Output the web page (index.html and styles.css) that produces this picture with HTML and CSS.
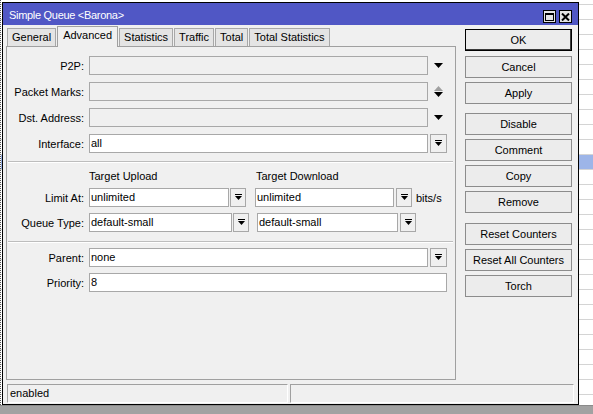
FILE: index.html
```html
<!DOCTYPE html>
<html>
<head>
<meta charset="utf-8">
<title>Simple Queue</title>
<link rel="stylesheet" href="styles.css">
</head>
<body>
<div class="desk">
  <div class="win">
    <div class="titlebar">
      <span class="title">Simple Queue &lt;Barona&gt;</span>
      <span class="tbtns">
        <span class="tbtn"><svg width="9" height="8" viewBox="0 0 9 8"><path d="M0 0h9v8H0z M1 2v5h7V2z" fill="#000" fill-rule="evenodd"/></svg></span>
        <span class="tbtn"><svg width="9" height="8" viewBox="0 0 9 8"><path d="M1 0.5l7 7M8 0.5l-7 7" stroke="#000" stroke-width="2"/></svg></span>
      </span>
    </div>
    <div class="body">
      <div class="main">
        <div class="tabs">
          <span class="tab">General</span>
          <span class="tab active">Advanced</span>
          <span class="tab">Statistics</span>
          <span class="tab">Traffic</span>
          <span class="tab">Total</span>
          <span class="tab">Total Statistics</span>
        </div>
        <div class="panel">
          <div class="grp g1">
            <div class="row">
              <span class="lbl">P2P:</span>
              <span class="inp dis fill"></span>
              <span class="arrow"><svg width="9" height="5" viewBox="0 0 9 5"><path d="M0 0h9L4.5 5z"/></svg></span>
            </div>
            <div class="row">
              <span class="lbl">Packet Marks:</span>
              <span class="inp dis fill"></span>
              <span class="arrow"><svg width="9" height="11" viewBox="0 0 9 11"><path d="M4.5 0L9 5H0z" fill="#a0a0a0"/><path d="M0 6h9L4.5 11z"/></svg></span>
            </div>
            <div class="row">
              <span class="lbl">Dst. Address:</span>
              <span class="inp dis fill"></span>
              <span class="arrow"><svg width="9" height="5" viewBox="0 0 9 5"><path d="M0 0h9L4.5 5z"/></svg></span>
            </div>
            <div class="row">
              <span class="lbl">Interface:</span>
              <span class="inp fill">all</span>
              <span class="dd"><svg width="7" height="7" viewBox="0 0 7 7"><rect width="7" height="1"/><path d="M0 2h7L3.5 6z"/></svg></span>
            </div>
          </div>
          <div class="sep"></div>
          <div class="hdr">
            <span class="hcol">Target Upload</span>
            <span>Target Download</span>
          </div>
          <div class="row lim">
            <span class="lbl">Limit At:</span>
            <span class="inp lim1">unlimited</span>
            <span class="dd sm"><svg width="7" height="7" viewBox="0 0 7 7"><rect width="7" height="1"/><path d="M0 2h7L3.5 6z"/></svg></span>
            <span class="inp lim2">unlimited</span>
            <span class="dd sm2"><svg width="7" height="7" viewBox="0 0 7 7"><rect width="7" height="1"/><path d="M0 2h7L3.5 6z"/></svg></span>
            <span class="unit">bits/s</span>
          </div>
          <div class="row qt">
            <span class="lbl">Queue Type:</span>
            <span class="inp q1">default-small</span>
            <span class="dd sm"><svg width="7" height="7" viewBox="0 0 7 7"><rect width="7" height="1"/><path d="M0 2h7L3.5 6z"/></svg></span>
            <span class="inp q2">default-small</span>
            <span class="dd sm2"><svg width="7" height="7" viewBox="0 0 7 7"><rect width="7" height="1"/><path d="M0 2h7L3.5 6z"/></svg></span>
          </div>
          <div class="sep sep2"></div>
          <div class="row par">
            <span class="lbl">Parent:</span>
            <span class="inp fill">none</span>
            <span class="dd"><svg width="7" height="7" viewBox="0 0 7 7"><rect width="7" height="1"/><path d="M0 2h7L3.5 6z"/></svg></span>
          </div>
          <div class="row pri">
            <span class="lbl">Priority:</span>
            <span class="inp fill">8</span>
          </div>
        </div>
      </div>
      <div class="actions">
        <span class="btn ok">OK</span>
        <span class="btn">Cancel</span>
        <span class="btn">Apply</span>
        <span class="btn gap1">Disable</span>
        <span class="btn">Comment</span>
        <span class="btn">Copy</span>
        <span class="btn">Remove</span>
        <span class="btn gap2">Reset Counters</span>
        <span class="btn">Reset All Counters</span>
        <span class="btn">Torch</span>
      </div>
    </div>
    <div class="status">
      <div class="cell c1">enabled</div>
      <div class="cell c2"></div>
    </div>
  </div>
</div>
<div class="taskbar"></div>
</body>
</html>
```

FILE: styles.css
```css
* {
  box-sizing: border-box;
  margin: 0;
  padding: 0;
}

html, body {
  width: 593px;
  height: 414px;
  overflow: hidden;
}

body {
  font-family: "Liberation Sans", Arial, sans-serif;
  font-size: 11px;
  color: #000;
  background: #fff;
}

.desk {
  height: 405px;
  padding: 2px 0 0 1px;
  border-left: 1px dotted #555;
  background-color: #fff;
  background-image:
    linear-gradient(to bottom, transparent 155px, #9db5e8 155px, #9db5e8 169px, transparent 169px),
    repeating-linear-gradient(to bottom, #d4d4d4 0px, #d4d4d4 1px, #ffffff 1px, #ffffff 15px);
  background-position: 0 0, 0 4px;
  background-repeat: no-repeat, repeat;
}

.win {
  width: 577px;
  height: 403px;
  border: 1px solid #000;
  background: #f0f0f0;
  display: flex;
  flex-direction: column;
}

.titlebar {
  height: 22px;
  flex: none;
  background: #5057c5;
  color: #fff;
  display: flex;
  align-items: center;
  justify-content: space-between;
  padding: 0 6px 0 6px;
}

.title {
  font-size: 11px;
  letter-spacing: -0.3px;
  padding-top: 1px;
}

.tbtns {
  display: flex;
  gap: 3px;
  margin-top: 5px;
}

.tbtn {
  width: 13px;
  height: 13px;
  border: 1px solid #000;
  background: #e4e4e4;
  display: flex;
  align-items: center;
  justify-content: center;
}

.body {
  flex: 1;
  display: flex;
  padding: 1px 0 0 3px;
}

.main {
  width: 450px;
  display: flex;
  flex-direction: column;
}

.tabs {
  height: 20px;
  display: flex;
  align-items: flex-end;
  padding-left: 1px;
  position: relative;
  z-index: 1;
}

.tab {
  height: 18px;
  line-height: 16px;
  padding: 0 4px;
  border: 1px solid #a8a8a8;
  border-bottom: none;
  background: #e4e4e4;
  margin-right: 1px;
  white-space: nowrap;
}

.tab.active {
  height: 21px;
  line-height: 17px;
  margin-bottom: -1px;
  background: #f0f0f0;
  border-color: #a0a0a0;
  padding: 0 5px;
}

.panel {
  height: 334px;
  border: 1px solid #a0a0a0;
  padding: 9px 8px 0 0;
}

.grp {
  display: flex;
  flex-direction: column;
  gap: 7px;
}

.row {
  height: 19px;
  display: flex;
  align-items: center;
}

.lbl {
  width: 77px;
  flex: none;
  text-align: right;
  margin-right: 5px;
  white-space: nowrap;
}

.inp {
  height: 19px;
  border: 1px solid #a8a8a8;
  background: #fff;
  padding-left: 1px;
  line-height: 17px;
  white-space: nowrap;
  overflow: hidden;
  flex: none;
}

.inp.dis {
  background: #f0f0f0;
}

.inp.fill {
  flex: 1;
}

.arrow {
  width: 17px;
  margin-left: 2px;
  display: flex;
  justify-content: center;
  align-items: center;
  flex: none;
}

.dd {
  width: 17px;
  height: 19px;
  margin-left: 2px;
  border: 1px solid #a8a8a8;
  background: #f0f0f0;
  display: flex;
  align-items: center;
  justify-content: center;
  flex: none;
}

.dd svg {
  display: block;
}

.dd.sm {
  width: 16px;
  margin-left: 1px;
}

.dd.sm2 {
  width: 16px;
  margin-left: 2px;
}

.sep {
  height: 1px;
  background: #bdbdbd;
  box-shadow: 0 1px 0 #fff;
  margin: 8px -6px 0 1px;
}

.sep2 {
  margin-top: 9px;
}

.hdr {
  display: flex;
  height: 13px;
  line-height: 13px;
  margin-top: 8px;
  padding-left: 82px;
}

.hcol {
  width: 167px;
}

.lim {
  margin-top: 5px;
}

.qt {
  margin-top: 6px;
}

.lim1 {
  width: 140px;
}

.lim2 {
  width: 139px;
  margin-left: 9px;
}

.q1 {
  width: 143px;
}

.q2 {
  width: 141px;
  margin-left: 8px;
}

.unit {
  margin-left: 4px;
}

.par,
.pri {
  margin-top: 6px;
}

.actions {
  width: 107px;
  margin-left: 9px;
  padding-top: 3px;
  display: flex;
  flex-direction: column;
}

.btn {
  height: 22px;
  border: 1px solid #8c8c8c;
  background: #ececec;
  display: flex;
  align-items: center;
  justify-content: center;
  margin-bottom: 4px;
  white-space: nowrap;
}

.btn.ok {
  border-color: #000;
  box-shadow: inset -1px -1px 0 #3a3a3a;
  margin-bottom: 5px;
}

.btn.gap1 {
  margin-top: 5px;
}

.btn.gap2 {
  margin-top: 6px;
}

.status {
  height: 20px;
  flex: none;
  display: flex;
  gap: 2px;
  padding: 0 4px 1px 4px;
}

.cell {
  height: 19px;
  border: 1px solid;
  border-color: #a0a0a0 #fff #fff #a0a0a0;
  padding-left: 2px;
  line-height: 17px;
}

.c1 {
  width: 281px;
}

.c2 {
  flex: 1;
}

.taskbar {
  height: 9px;
  background: #a2a2a2;
  border-top: 1px solid #8a8a8a;
}
```
